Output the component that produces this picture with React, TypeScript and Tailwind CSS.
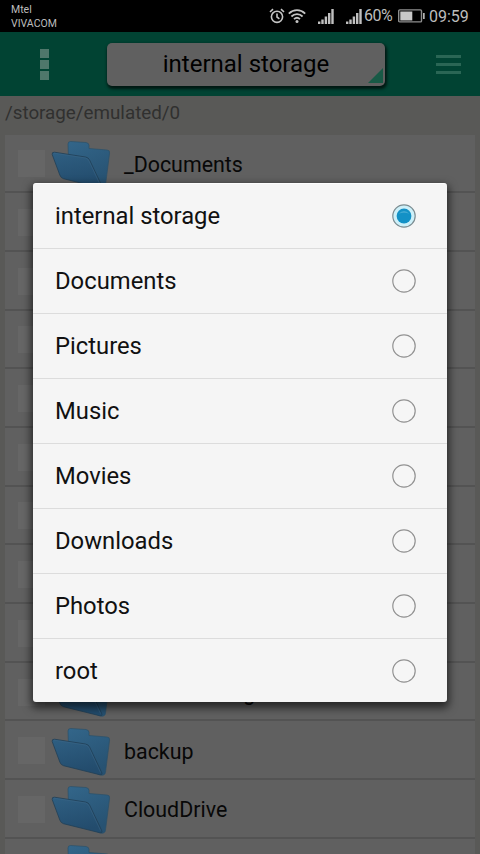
import React, { useState } from 'react';

type Folder = { id: number; name?: string };

const folders: Folder[] = [
  { id: 1, name: '_Documents' },
  { id: 2 },
  { id: 3 },
  { id: 4 },
  { id: 5 },
  { id: 6 },
  { id: 7 },
  { id: 8 },
  { id: 9 },
  { id: 10, name: 'Call recording' },
  { id: 11, name: 'backup' },
  { id: 12, name: 'CloudDrive' },
  { id: 13 },
];

const locations = [
  'internal storage',
  'Documents',
  'Pictures',
  'Music',
  'Movies',
  'Downloads',
  'Photos',
  'root',
];

const AlarmIcon = () => (
  <svg className="w-4 h-4" viewBox="0 0 16 16" fill="none" stroke="#c4c4c4" strokeWidth="1.6">
    <circle cx="8" cy="8.8" r="5.6" />
    <path d="M8 5.4v3.6l2.4 1.8M1 4l3-2.8M15 4l-3-2.8" />
  </svg>
);

const WifiIcon = () => (
  <svg className="w-[18px] h-4" viewBox="0 0 18 16" fill="none" stroke="#c4c4c4" strokeWidth="1.8">
    <path d="M.8 5.6c4.8-4.6 11.6-4.6 16.4 0M3.4 8.5c3.2-3.1 8-3.1 11.2 0M6 11.2c1.8-1.7 4.2-1.7 6 0" />
    <circle cx="9" cy="13.6" r="1.5" fill="#c4c4c4" stroke="none" />
  </svg>
);

const SignalIcon = () => (
  <svg className="w-4 h-[15px]" viewBox="0 0 16 15" fill="#c0c0c0">
    <rect x="0" y="12.5" width="2.4" height="2.5" />
    <rect x="3.3" y="10.5" width="2.4" height="4.5" />
    <rect x="6.7" y="7.5" width="2.4" height="7.5" />
    <rect x="10" y="4" width="2.4" height="11" />
    <rect x="13.3" y="0" width="2.4" height="15" />
  </svg>
);

const BatteryIcon = () => (
  <svg className="w-[27px] h-[14px]" viewBox="0 0 27 14">
    <rect x=".7" y=".9" width="22.8" height="12" rx="1" fill="none" stroke="#8e8e8e" strokeWidth="1.4" />
    <rect x="2.3" y="2.5" width="12" height="9" fill="#c8c8c8" />
    <rect x="25" y="4" width="1.7" height="6" fill="#b4b4b4" />
  </svg>
);

const FolderIcon = () => (
  <svg className="w-[60px] h-[50px]" viewBox="0 0 60 50">
    <defs>
      <linearGradient id="folderFront" x1="0" y1="0" x2="0.3" y2="1">
        <stop offset="0" stopColor="#2f5f82" />
        <stop offset="1" stopColor="#234c6d" />
      </linearGradient>
      <linearGradient id="folderBack" x1="0" y1="0" x2="0.4" y2="1">
        <stop offset="0" stopColor="#33668a" />
        <stop offset="1" stopColor="#275272" />
      </linearGradient>
    </defs>
    <path
      d="M17 4Q17 1.5 19.5 1.5L35 2.5Q38 3 38 5.5V8.5L56 10Q59 10.2 58.6 13L54.5 45Q54 49 49.5 48L18 36Z"
      fill="url(#folderBack)"
      stroke="#2b5069"
      strokeWidth=".7"
    />
    <path
      d="M1.2 14.5Q.7 12 3.5 12.2L34.5 17Q37.5 17.4 38.7 20.2L51 46.2Q51.5 48 49 47.8L12.5 38.7Q9.8 38 8.8 35Z"
      fill="url(#folderFront)"
      stroke="#213f55"
      strokeWidth=".8"
    />
    <path d="M3 13.2L34.5 18Q37 18.6 38 21L49.5 45.5" fill="none" stroke="#3c6786" strokeWidth=".5" />
  </svg>
);

const StatusBar = () => (
  <div className="h-8 bg-black flex justify-between text-[#bdbdbd]">
    <div className="pl-[11px] pt-[3px] text-[10.5px] leading-[14px]">
      <div>Mtel</div>
      <div>VIVACOM</div>
    </div>
    <div className="flex items-center pr-3 text-base">
      <AlarmIcon />
      <div className="ml-[3px]">
        <WifiIcon />
      </div>
      <div className="ml-3">
        <SignalIcon />
      </div>
      <div className="ml-3">
        <SignalIcon />
      </div>
      <span className="ml-[2px] w-[30px] tracking-[-0.5px]">60%</span>
      <div className="ml-1">
        <BatteryIcon />
      </div>
      <span className="ml-1 w-[39px] pt-px">09:59</span>
    </div>
  </div>
);

const Toolbar = ({ title }: { title: string }) => (
  <div className="h-16 bg-[#014333] flex items-center">
    <div className="ml-10 mt-px flex flex-col gap-[2px]">
      <div className="w-[9px] h-[9px] bg-[#4f776b]" />
      <div className="w-[9px] h-[9px] bg-[#4f776b]" />
      <div className="w-[9px] h-[9px] bg-[#4f776b]" />
    </div>
    <button className="relative ml-[58px] w-[278px] h-[43px] rounded-[5px] bg-[#606060] text-[24px] leading-[43px] text-black text-center shadow-[1px_2px_3px_1px_rgba(0,0,0,0.65)]">
      {title}
      <svg className="absolute right-[2px] bottom-[3px] w-[15px] h-[15px]" viewBox="0 0 15 15">
        <path d="M15 0V15H0Z" fill="#185a46" />
      </svg>
    </button>
    <div className="ml-[51px] flex flex-col gap-[5px]">
      <div className="w-[25px] h-[3px] bg-[#2a6655]" />
      <div className="w-[25px] h-[3px] bg-[#2a6655]" />
      <div className="w-[25px] h-[3px] bg-[#2a6655]" />
    </div>
  </div>
);

const FolderRow = ({ folder }: { folder: Folder }) => (
  <div className="h-[58.7px] shrink-0 flex items-center border-b-2 border-[#535353] bg-[#606060]">
    <div className="ml-[13px] mt-[2px] w-[27px] h-[27px] bg-[#666666]" />
    <div className="ml-[6px] mt-1">
      <FolderIcon />
    </div>
    <span className="ml-[13px] mt-1 text-[21.4px] text-[#080808]">{folder.name}</span>
  </div>
);

const Radio = ({ checked }: { checked: boolean }) => (
  <svg className="w-6 h-6" viewBox="0 0 24 24">
    <circle
      cx="12"
      cy="12"
      r="11.2"
      fill={checked ? '#cdf0f9' : '#f6f6f6'}
      stroke={checked ? '#7d8d92' : '#929292'}
      strokeWidth="1.2"
    />
    {checked && (
      <>
        <circle cx="12" cy="12" r="7.4" fill="#1391c6" />
        <path d="M6.5 9.8Q12 4 17.5 9.8Q12 7.8 6.5 9.8Z" fill="#3fa9d3" />
      </>
    )}
  </svg>
);

const App: React.FC = () => {
  const [selected, setSelected] = useState('internal storage');

  return (
    <div className="relative w-[480px] h-[854px] overflow-hidden bg-[#595957] font-['Roboto','Noto_Sans',sans-serif]">
      <StatusBar />
      <Toolbar title={selected} />
      <div className="h-[38.5px] pl-[5px] text-[18.8px] leading-[34px] text-[#30302f]">/storage/emulated/0</div>
      <div className="ml-[5px] mr-[5px] flex flex-col">
        {folders.map((folder) => (
          <FolderRow key={folder.id} folder={folder} />
        ))}
      </div>

      {/* storage picker */}
      <div className="absolute left-[33px] top-[183px] w-[414px] h-[519px] rounded-[3px] overflow-hidden bg-[#f5f5f5] border-t border-[#fdfdfd] shadow-[0_4px_9px_2px_rgba(0,0,0,0.6)]">
        {locations.map((location) => (
          <button
            key={location}
            onClick={() => setSelected(location)}
            className="w-full h-[65px] pl-[22px] pr-[31px] flex items-center justify-between border-b border-[#dcdcdc] last:h-16 last:border-b-0 text-[23.8px] text-[#111111]"
          >
            <span className="pt-[2px]">{location}</span>
            <Radio checked={location === selected} />
          </button>
        ))}
      </div>
    </div>
  );
};

export default App;
